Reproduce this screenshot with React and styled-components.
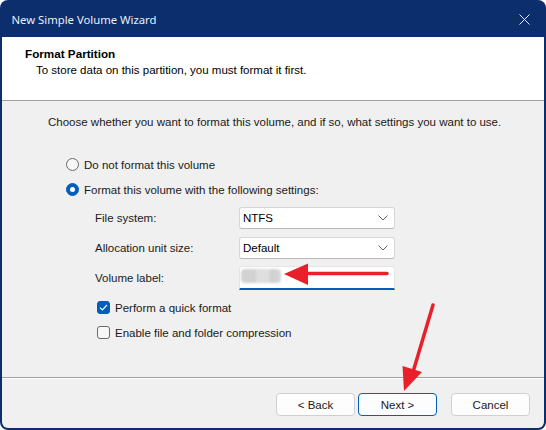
import React from "react";
import styled, { createGlobalStyle } from "styled-components";

const Global = createGlobalStyle`
  html, body { margin: 0; padding: 0; background: #ffffff; }
  * { box-sizing: border-box; }
`;

const NAVY = "#0c2e6c";
const BLUE = "#005fb8";

const Window = styled.div`
  position: relative;
  width: 546px;
  height: 430px;
  background: ${NAVY};
  border-radius: 8px;
  padding: 0 2px 2px 2px;
  display: flex;
  flex-direction: column;
  overflow: hidden;
  font-family: "Liberation Sans", Arial, sans-serif;
  font-size: 11.5px;
  color: #1a1a1a;
`;

const TitleBar = styled.div`
  height: 37px;
  flex: none;
  display: flex;
  align-items: center;
  justify-content: space-between;
  padding: 1px 14px 0 9.5px;
  color: #e9eef7;
  font-family: "Noto Sans", "Open Sans", sans-serif;
  font-size: 11.3px;
`;

const Content = styled.div`
  flex: 1;
  display: flex;
  flex-direction: column;
  background: #f0f0f0;
  border-radius: 0 0 6px 6px;
  overflow: hidden;
`;

const Header = styled.div`
  height: 64px;
  flex: none;
  background: #ffffff;
  border-bottom: 1px solid #a0a0a0;
  padding: 10px 0 0 23px;
`;

const HeaderTitle = styled.div`
  font-weight: bold;
  font-size: 11.7px;
  line-height: 14px;
  color: #000;
`;

const HeaderSub = styled.div`
  line-height: 14px;
  margin-top: 2px;
  padding-left: 11px;
  color: #000;
`;

const Body = styled.div`
  flex: 1;
  padding: 13px 0 0 46px;
  display: flex;
  flex-direction: column;
`;

const Intro = styled.div`
  line-height: 16px;
  margin-bottom: 22px;
`;

const OptionRow = styled.label`
  height: 25px;
  display: flex;
  align-items: center;
  gap: 5px;
  padding-left: ${(p) => p.$indent || 0}px;
`;

const Radio = styled.span`
  width: 13px;
  height: 13px;
  border-radius: 50%;
  flex: none;
  border: 1px solid ${(p) => (p.$checked ? BLUE : "#6b6b6b")};
  background: ${(p) => (p.$checked ? BLUE : "#f7f7f7")};
  display: flex;
  align-items: center;
  justify-content: center;
  &::after {
    content: "";
    width: 5px;
    height: 5px;
    border-radius: 50%;
    background: #fff;
    display: ${(p) => (p.$checked ? "block" : "none")};
  }
`;

const Check = styled.span`
  width: 13px;
  height: 13px;
  border-radius: 3px;
  flex: none;
  border: 1px solid ${(p) => (p.$checked ? BLUE : "#6b6b6b")};
  background: ${(p) => (p.$checked ? BLUE : "#f7f7f7")};
  display: flex;
  align-items: center;
  justify-content: center;
`;

const Fields = styled.div`
  display: grid;
  grid-template-columns: 144px 156px;
  grid-auto-rows: 30px;
  align-items: center;
  padding-left: 47px;
  margin-top: 1px;
  margin-bottom: 2px;
`;

const FieldLabel = styled.div`
  line-height: 14px;
`;

const Select = styled.div`
  height: 22px;
  background: #ffffff;
  border: 1px solid #d6d6d6;
  border-bottom-color: #b8b8b8;
  border-radius: 3px;
  display: flex;
  align-items: center;
  justify-content: space-between;
  padding: 0 6px 0 3px;
  color: #000;
`;

const TextInput = styled.div`
  height: 24px;
  background: #ffffff;
  border: 1px solid #e6e6e6;
  border-bottom: 2px solid ${BLUE};
  border-radius: 3px 3px 0 0;
  display: flex;
  align-items: center;
  padding-left: 1px;
  margin-top: -1px;
`;

const Blurred = styled.span`
  width: 40px;
  height: 14px;
  border-radius: 4px;
  background: linear-gradient(90deg, #d2d2d2 0%, #d2d2d2 35%, #dedede 40%, #dedede 70%, #cfcfcf 75%, #d8d8d8 100%);
  filter: blur(0.8px);
  margin-top: -3px;
`;

const Footer = styled.div`
  height: 51px;
  flex: none;
  border-top: 1px solid #a0a0a0;
  box-shadow: inset 0 1px 0 #ffffff;
  display: flex;
  justify-content: flex-end;
  align-items: flex-start;
  padding: 15px 14px 0 0;
`;

const ButtonPair = styled.div`
  display: flex;
  gap: 3px;
  margin-right: 14px;
`;

const Button = styled.button`
  width: 79px;
  height: 23px;
  background: #fdfdfd;
  border: 1px solid ${(p) => (p.$default ? BLUE : "#d0d0d0")};
  border-radius: 4px;
  font-family: "Liberation Sans", Arial, sans-serif;
  font-size: 11.5px;
  color: #1a1a1a;
  padding: 0;
  display: flex;
  align-items: center;
  justify-content: center;
`;

const Overlay = styled.svg`
  position: absolute;
  left: 0;
  top: 0;
  pointer-events: none;
`;

const Chevron = () => (
  <svg width="10" height="6" viewBox="0 0 10 6">
    <path d="M0.5 0.5 L5 5 L9.5 0.5" fill="none" stroke="#606060" strokeWidth="1" />
  </svg>
);

const CheckMark = () => (
  <svg width="9" height="7" viewBox="0 0 9 7">
    <path d="M1 3.6 L3.4 6 L8 1" fill="none" stroke="#ffffff" strokeWidth="1.2" />
  </svg>
);

const CloseIcon = () => (
  <svg width="11" height="11" viewBox="0 0 11 11">
    <path d="M0.5 0.5 L10.5 10.5 M10.5 0.5 L0.5 10.5" stroke="#e9eef7" strokeWidth="1" />
  </svg>
);

export default function App() {
  return (
    <>
      <Global />
      <Window>
        <TitleBar>
          <span>New Simple Volume Wizard</span>
          <CloseIcon />
        </TitleBar>
        <Content>
          <Header>
            <HeaderTitle>Format Partition</HeaderTitle>
            <HeaderSub>To store data on this partition, you must format it first.</HeaderSub>
          </Header>
          <Body>
            <Intro>Choose whether you want to format this volume, and if so, what settings you want to use.</Intro>
            <OptionRow $indent={18}>
              <Radio />
              <span>Do not format this volume</span>
            </OptionRow>
            <OptionRow $indent={18}>
              <Radio $checked />
              <span>Format this volume with the following settings:</span>
            </OptionRow>
            <Fields>
              <FieldLabel>File system:</FieldLabel>
              <Select>
                <span>NTFS</span>
                <Chevron />
              </Select>
              <FieldLabel>Allocation unit size:</FieldLabel>
              <Select>
                <span>Default</span>
                <Chevron />
              </Select>
              <FieldLabel>Volume label:</FieldLabel>
              <TextInput>
                <Blurred />
              </TextInput>
            </Fields>
            <OptionRow $indent={49}>
              <Check $checked>
                <CheckMark />
              </Check>
              <span>Perform a quick format</span>
            </OptionRow>
            <OptionRow $indent={49}>
              <Check />
              <span>Enable file and folder compression</span>
            </OptionRow>
          </Body>
          <Footer>
            <ButtonPair>
              <Button>&lt; Back</Button>
              <Button $default>Next &gt;</Button>
            </ButtonPair>
            <Button>Cancel</Button>
          </Footer>
        </Content>
        <Overlay width="546" height="430" viewBox="0 0 546 430">
          <line x1="387" y1="273.5" x2="300" y2="273.5" stroke="#e8202a" strokeWidth="3.5" strokeLinecap="round" />
          <polygon points="284,274 308,263.5 308,285" fill="#e8202a" />
          <line x1="433" y1="305" x2="413" y2="372" stroke="#e8202a" strokeWidth="3.5" strokeLinecap="round" />
          <polygon points="404,391 402.5,366 422,372" fill="#e8202a" />
        </Overlay>
      </Window>
    </>
  );
}
